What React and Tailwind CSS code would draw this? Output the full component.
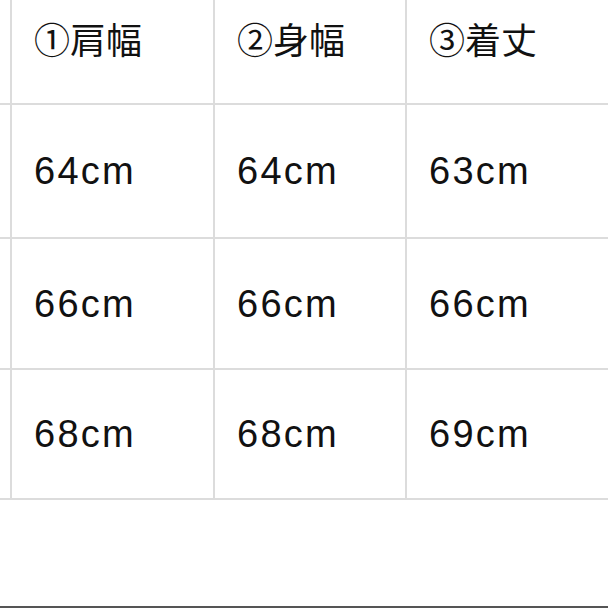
import React from "react";

const headers = ["①肩幅", "②身幅", "③着丈"];
const rows = [
  { h: "h-[132px]", v: ["64cm", "64cm", "63cm"] },
  { h: "h-[129px]", v: ["66cm", "66cm", "66cm"] },
  { h: "h-[128px]", v: ["68cm", "68cm", "69cm"] },
];

export default function App() {
  return (
    <div className="w-[608px] h-[608px] bg-white flex flex-col overflow-hidden">
      <div className="grid grid-cols-[10px_201px_190px_201px] gap-[2px] bg-[#dcdcdc] pb-[2px]">
        <div className="bg-white h-[103px]" />
        {headers.map((t) => (
          <div
            key={t}
            className="bg-white h-[103px] flex items-center pb-[28px] pl-[22px] text-[36px] font-normal leading-none text-[#111111]"
            style={{ fontFamily: '"Noto Sans CJK JP", "Noto Sans", sans-serif' }}
          >
            {t}
          </div>
        ))}
        {rows.map((r, i) => (
          <React.Fragment key={i}>
            <div className={`bg-white ${r.h}`} />
            {r.v.map((v, j) => (
              <div
                key={j}
                className={`bg-white ${r.h} flex items-center pl-[22px] text-[38px] leading-none tracking-[0.06em] text-[#111111]`}
                style={{ fontFamily: '"Liberation Sans", Arial, sans-serif' }}
              >
                {v}
              </div>
            ))}
          </React.Fragment>
        ))}
      </div>
      <div className="flex-1" />
      <div className="h-[2px] bg-[#555555]" />
    </div>
  );
}
